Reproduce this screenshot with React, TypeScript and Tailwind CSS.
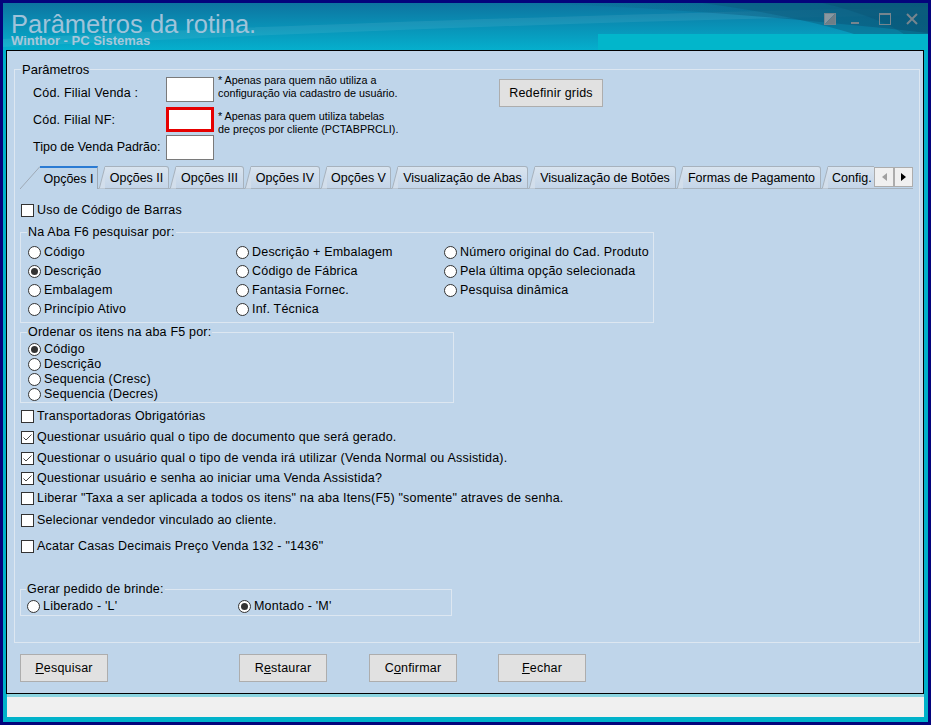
import React from 'react';

type Opt = { label: string; checked?: boolean };

function CheckBox({ checked = false }: { checked?: boolean }) {
  return (
    <span className="flex h-[13px] w-[13px] shrink-0 items-center justify-center border border-[#333333] bg-white">
      {checked && (
        <svg width="11" height="11" viewBox="0 0 11 11">
          <path d="M1.5 5.5 L4 8 L9.5 2.5" fill="none" stroke="#4a4a4a" strokeWidth="1" />
        </svg>
      )}
    </span>
  );
}

function RadioDot({ checked = false }: { checked?: boolean }) {
  return (
    <span className="flex h-[13px] w-[13px] shrink-0 items-center justify-center rounded-full border border-[#333333] bg-white">
      {checked && <span className="h-[7px] w-[7px] rounded-full bg-[#333333]" />}
    </span>
  );
}

function CheckRow({ label, checked, className }: { label: string; checked?: boolean; className: string }) {
  return (
    <div className={`flex h-[15px] items-center ${className}`}>
      <CheckBox checked={checked} />
      <span className="ml-[3px] whitespace-nowrap">{label}</span>
    </div>
  );
}

function RadioRow({ label, checked, className }: { label: string; checked?: boolean; className: string }) {
  return (
    <div className={`flex items-center ${className}`}>
      <RadioDot checked={checked} />
      <span className="ml-[3px] whitespace-nowrap">{label}</span>
    </div>
  );
}

function Group({
  label,
  className,
  labelClass,
  children,
}: {
  label: string;
  className: string;
  labelClass: string;
  children: React.ReactNode;
}) {
  return (
    <div className={`border border-[#dde7f1] ${className}`}>
      <div className={`-mt-[8px] w-fit bg-[#bfd5ea] px-px leading-[15px] ${labelClass}`}>{label}</div>
      {children}
    </div>
  );
}

function TitleBar() {
  return (
    <div className="relative flex h-[47px] shrink-0 justify-between overflow-hidden">
      <svg className="absolute inset-0" width="925" height="47" viewBox="0 0 925 47">
        <defs>
          <linearGradient id="tbBase" x1="0" y1="0" x2="0" y2="1">
            <stop offset="0" stopColor="#0d74a0" />
            <stop offset="1" stopColor="#05afcd" />
          </linearGradient>
          <linearGradient id="tbShade" x1="0" y1="0" x2="1" y2="0">
            <stop offset="0" stopColor="#0a5c80" stopOpacity="0" />
            <stop offset="1" stopColor="#0a5c80" stopOpacity="0.75" />
          </linearGradient>
        </defs>
        <rect width="925" height="47" fill="url(#tbBase)" />
        <path d="M0 36 C 220 24, 560 12, 925 4 L925 12 C 600 18, 300 30, 0 44 Z" fill="#ffffff" opacity="0.07" />
        <path d="M520 0 C 650 4, 780 14, 925 30 L925 0 Z" fill="url(#tbShade)" />
        <path d="M700 0 C 760 8, 820 20, 860 34 L925 34 L925 0 Z" fill="#0a5a7c" opacity="0.45" />
        <path d="M820 0 C 860 10, 890 22, 905 34 L925 34 L925 0 Z" fill="#08506f" opacity="0.35" />
        <rect x="595" y="31" width="330" height="16" fill="#02b6cb" />
      </svg>
      <div className="relative pl-[8px] pt-[10px]">
        <div className="whitespace-nowrap text-[25.5px] leading-[22px] text-[#9fc3da]">Parâmetros da rotina.</div>
        <div className="whitespace-nowrap text-[13px] font-bold leading-[12px] text-[#a7c7da]">
          Winthor - PC Sistemas
        </div>
      </div>
      <div className="relative flex items-start pr-[10px] pt-[10px]">
        <svg width="12" height="12" viewBox="0 0 12 12">
          <polygon points="0,0 12,0 0,12" fill="#8898a1" />
          <polygon points="12,0 12,12 0,12" fill="#6f7e87" />
          <rect x="0.5" y="0.5" width="11" height="11" fill="none" stroke="#76858e" />
        </svg>
        <svg className="ml-[15px]" width="8" height="12" viewBox="0 0 8 12">
          <rect x="0" y="9" width="8" height="2" fill="#76858e" />
        </svg>
        <svg className="ml-[20px]" width="12" height="12" viewBox="0 0 12 12">
          <rect x="0.5" y="0.5" width="11" height="11" fill="none" stroke="#76858e" />
          <rect x="0" y="0" width="12" height="2" fill="#76858e" />
        </svg>
        <svg className="ml-[15px]" width="12" height="12" viewBox="0 0 12 12">
          <path d="M1 1 L11 11 M11 1 L1 11" stroke="#76858e" strokeWidth="2" />
        </svg>
      </div>
    </div>
  );
}

const otherTabs = [
  { label: 'Opções II', w: 'w-[64px] justify-center' },
  { label: 'Opções III', w: 'w-[68px] justify-center' },
  { label: 'Opções IV', w: 'w-[69px] justify-center' },
  { label: 'Opções V', w: 'w-[64px] justify-center' },
  { label: 'Visualização de Abas', w: 'w-[130px] justify-center' },
  { label: 'Visualização de Botões', w: 'w-[141px] justify-center' },
  { label: 'Formas de Pagamento', w: 'w-[138px] justify-center' },
  { label: 'Config.', w: 'w-[60px] justify-start pl-[4px]' },
];

function TabStrip() {
  return (
    <div className="ml-[5px] mt-[6px] flex h-[23px] w-[893px] bg-[linear-gradient(to_top,#a7b2bd_1px,transparent_1px)] text-[12.5px]">
      <div className="flex min-w-0 flex-1 items-end overflow-hidden">
        <div className="flex h-[23px] shrink-0">
          <svg width="20" height="23" viewBox="0 0 20 23" className="shrink-0">
            <polygon points="0,23 20,0 20,23" fill="#bfd5ea" />
            <line x1="0" y1="23" x2="20" y2="0.5" stroke="#9ea9b5" />
          </svg>
          <div className="flex w-[58px] items-center justify-center border-r border-t-2 border-r-[#9ea9b5] border-t-[#2b7bd3] bg-[#bfd5ea] pt-[1px]">
            Opções I
          </div>
        </div>
        {otherTabs.map((t) => (
          <div key={t.label} className="ml-px flex h-[23px] shrink-0">
            <svg width="6" height="23" viewBox="0 0 6 23" className="shrink-0">
              <polygon points="0,22.5 6,0.5 6,22.5" fill="#d2deeb" />
              <line x1="0.3" y1="22.5" x2="6" y2="0.5" stroke="#a7b2bd" />
            </svg>
            <div
              className={`flex shrink-0 items-center whitespace-nowrap rounded-tr-[3px] border-b border-r border-t border-[#a7b2bd] bg-gradient-to-b from-[#d9e4ef] to-[#c4d5e8] pt-[1px] ${t.w}`}
            >
              {t.label}
            </div>
          </div>
        ))}
      </div>
      <div className="mt-px flex h-[20px] w-[20px] items-center justify-center border border-[#adadad] bg-[#f0f0f0]">
        <svg width="5" height="8" viewBox="0 0 5 8">
          <polygon points="5,0 5,8 0,4" fill="#a0a0a0" />
        </svg>
      </div>
      <div className="mt-px flex h-[20px] w-[19px] items-center justify-center border border-[#adadad] bg-[#f0f0f0]">
        <svg width="5" height="8" viewBox="0 0 5 8">
          <polygon points="0,0 0,8 5,4" fill="#000000" />
        </svg>
      </div>
    </div>
  );
}

const f6Options: Opt[] = [
  { label: 'Código' },
  { label: 'Descrição + Embalagem' },
  { label: 'Número original do Cad. Produto' },
  { label: 'Descrição', checked: true },
  { label: 'Código de Fábrica' },
  { label: 'Pela última opção selecionada' },
  { label: 'Embalagem' },
  { label: 'Fantasia Fornec.' },
  { label: 'Pesquisa dinâmica' },
  { label: 'Princípio Ativo' },
  { label: 'Inf. Técnica' },
];

const f5Options: Opt[] = [
  { label: 'Código', checked: true },
  { label: 'Descrição' },
  { label: 'Sequencia (Cresc)' },
  { label: 'Sequencia (Decres)' },
];

function TabPage() {
  return (
    <div className="text-[12.5px] tracking-[0.2px]">
      <CheckRow className="ml-[6px] mt-[14px]" label="Uso de Código de Barras" />

      <Group className="ml-[5px] mt-[14px] w-[634px]" labelClass="ml-[6px]" label="Na Aba F6 pesquisar por:">
        <div className="mt-[3px] grid grid-cols-[208px_208px_1fr] pb-[3px] pl-[7px]">
          {f6Options.map((o) => (
            <RadioRow key={o.label} className="h-[19px]" label={o.label} checked={o.checked} />
          ))}
        </div>
      </Group>

      <Group className="ml-[5px] mt-[9px] w-[434px]" labelClass="ml-[6px]" label="Ordenar os itens na aba F5 por:">
        <div className="mt-[2px] flex flex-col pl-[7px]">
          {f5Options.map((o) => (
            <RadioRow key={o.label} className="h-[15px]" label={o.label} checked={o.checked} />
          ))}
        </div>
      </Group>

      <CheckRow className="ml-[6px] mt-[6px]" label="Transportadoras Obrigatórias" />
      <CheckRow className="ml-[6px] mt-[6px]" checked label="Questionar usuário qual o tipo de documento que será gerado." />
      <CheckRow
        className="ml-[6px] mt-[6px]"
        checked
        label="Questionar o usuário qual o tipo de venda irá utilizar (Venda Normal ou Assistida)."
      />
      <CheckRow className="ml-[6px] mt-[5px]" checked label="Questionar usuário e senha ao iniciar uma Venda Assistida?" />
      <CheckRow
        className="ml-[6px] mt-[5px]"
        label={'Liberar "Taxa a ser aplicada a todos os itens" na aba Itens(F5) "somente" atraves de senha.'}
      />
      <CheckRow className="ml-[6px] mt-[7px]" label="Selecionar vendedor vinculado ao cliente." />
      <CheckRow className="ml-[6px] mt-[11px]" label={'Acatar Casas Decimais Preço Venda 132 - "1436"'} />

      <Group className="ml-[5px] mt-[35px] w-[432px]" labelClass="ml-[5px]" label="Gerar pedido de brinde:">
        <div className="mt-[2px] grid grid-cols-[211px_1fr] pb-[1px] pl-[6px]">
          <RadioRow className="h-[15px]" label="Liberado - 'L'" />
          <RadioRow className="h-[15px]" checked label="Montado - 'M'" />
        </div>
      </Group>
    </div>
  );
}

function TopFields() {
  return (
    <div className="pl-[18px] text-[12.5px] tracking-[0.2px]">
      <div className="flex h-[25px] items-center">
        <span className="mt-[8px] w-[133px] shrink-0 whitespace-nowrap">Cód. Filial Venda :</span>
        <div className="h-[25px] w-[48px] shrink-0 border border-[#7a7a7a] bg-white" />
        <div className="-mt-[3px] ml-[4px] w-[281px] shrink-0 self-start whitespace-nowrap text-[10.8px] leading-[13px] tracking-normal">
          <div>* Apenas para quem não utiliza a</div>
          <div>configuração via cadastro de usuário.</div>
        </div>
        <button className="mt-[2px] h-[28px] w-[104px] shrink-0 self-start border border-[#adadad] bg-[#e1e1e1]">
          Redefinir grids
        </button>
      </div>
      <div className="mt-[5px] flex h-[25px] items-center">
        <span className="mt-[2px] w-[133px] shrink-0 whitespace-nowrap">Cód. Filial NF:</span>
        <div className="h-[25px] w-[48px] shrink-0 border-[3px] border-[#e60000] bg-white" />
        <div className="ml-[4px] mt-[3px] w-[281px] shrink-0 self-start whitespace-nowrap text-[10.8px] leading-[13px] tracking-normal">
          <div>* Apenas para quem utiliza tabelas</div>
          <div>de preços por cliente (PCTABPRCLI).</div>
        </div>
      </div>
      <div className="mt-[3px] flex h-[25px] items-center">
        <span className="w-[133px] shrink-0 whitespace-nowrap tracking-normal">Tipo de Venda Padrão:</span>
        <div className="h-[25px] w-[48px] shrink-0 border border-[#7a7a7a] bg-white" />
      </div>
    </div>
  );
}

function Buttons() {
  const btn = 'h-[28px] w-[88px] border border-[#adadad] bg-[#e1e1e1] text-[12.5px] tracking-[0.2px]';
  return (
    <div className="mt-[11px] flex pl-[13px]">
      <button className={btn}>
        <span className="underline">P</span>esquisar
      </button>
      <button className={`ml-[131px] ${btn}`}>
        R<span className="underline">e</span>staurar
      </button>
      <button className={`ml-[42px] ${btn}`}>
        C<span className="underline">o</span>nfirmar
      </button>
      <button className={`ml-[41px] ${btn}`}>
        <span className="underline">F</span>echar
      </button>
    </div>
  );
}

export default function App() {
  return (
    <div className="h-[725px] w-[931px] bg-[#04047c] p-[3px] font-['Liberation_Sans',Arial,sans-serif] text-black">
      <div className="flex h-full flex-col bg-[#00b2ca]">
        <TitleBar />
        <div className="ml-[3px] mr-[4px] h-[644px] shrink-0 border border-black bg-[#bfd5ea]">
          <div className="ml-[7px] mt-[18px] h-[574px] w-[906px] border border-[#dde7f1]">
            <div className="-mt-[8px] ml-[6px] w-fit bg-[#bfd5ea] px-px text-[13px] leading-[15px]">Parâmetros</div>
            <TopFields />
            <TabStrip />
            <TabPage />
          </div>
          <Buttons />
        </div>
        <div className="ml-[4px] mr-[4px] h-[23px] shrink-0 border-t-[3px] border-[#8ad4e0] bg-[#f0f0f0]" />
      </div>
    </div>
  );
}
